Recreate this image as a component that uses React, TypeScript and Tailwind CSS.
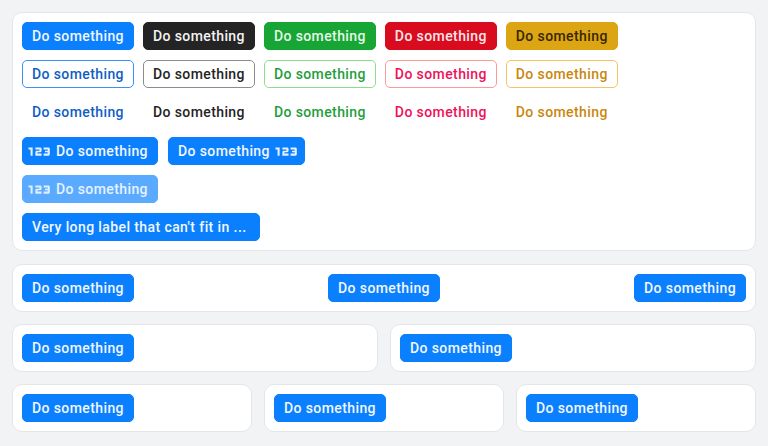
import React from 'react'
import { Md123 } from 'react-icons/md'

type Variant = 'solid' | 'outline' | 'ghost'
type Tone = 'blue' | 'dark' | 'green' | 'red' | 'yellow'

const styles: Record<Variant, Record<Tone, string>> = {
  solid: {
    blue: 'bg-[#0a80ff] text-[#f2f7ff] border-[#0a80ff]',
    dark: 'bg-[#242424] text-[#f4f4f4] border-[#242424]',
    green: 'bg-[#17a535] text-[#e4f9e6] border-[#17a535]',
    red: 'bg-[#d80b1f] text-[#fde6e8] border-[#d80b1f]',
    yellow: 'bg-[#dba513] text-[#3a2600] border-[#dba513]',
  },
  outline: {
    blue: 'bg-white text-[#0f5ec4] border-[#3a90fb]',
    dark: 'bg-white text-[#242424] border-[#8c8c8c]',
    green: 'bg-white text-[#1f9e3c] border-[#8ddd8d]',
    red: 'bg-white text-[#ef1158] border-[#fc9a9a]',
    yellow: 'bg-white text-[#c9870f] border-[#f3c563]',
  },
  ghost: {
    blue: 'bg-transparent text-[#0f5ec4] border-transparent',
    dark: 'bg-transparent text-[#242424] border-transparent',
    green: 'bg-transparent text-[#1f9e3c] border-transparent',
    red: 'bg-transparent text-[#ef1158] border-transparent',
    yellow: 'bg-transparent text-[#c9870f] border-transparent',
  },
}

const tones: Tone[] = ['blue', 'dark', 'green', 'red', 'yellow']

// the md icon has padding round the digits, crop it with negative margins
const Icon = () => <Md123 className="w-[33px] h-[33px] -mx-[7px] -my-[10px] shrink-0 opacity-95" />

const Button: React.FC<{
  variant?: Variant
  tone?: Tone
  iconLeft?: boolean
  iconRight?: boolean
  disabled?: boolean
  className?: string
  children: React.ReactNode
}> = ({ variant = 'solid', tone = 'blue', iconLeft, iconRight, disabled, className = '', children }) => (
  <button
    className={`h-7 shrink-0 inline-flex items-center gap-[7px] border rounded-[5px] text-[14px] font-medium tracking-[0.4px] leading-none whitespace-nowrap ${
      iconLeft ? 'pl-[7px] pr-[9px]' : iconRight ? 'pl-[9px] pr-[8px]' : 'px-[9px]'
    } ${disabled ? 'bg-[#5aabff] border-[#5aabff] text-[#e6f2ff]' : styles[variant][tone]} ${className}`}
  >
    {iconLeft && <Icon />}
    <span>{children}</span>
    {iconRight && <Icon />}
  </button>
)

const Card: React.FC<{ className?: string; children: React.ReactNode }> = ({ className = '', children }) => (
  <div className={`bg-white border border-[#e4e6ea] rounded-[10px] p-[9px] ${className}`}>{children}</div>
)

const App: React.FC = () => {
  return (
    <div className="min-h-[446px] bg-[#f2f3f5] p-3 flex flex-col gap-3" style={{ fontFamily: 'Roboto, "Liberation Sans", sans-serif' }}>
      <Card className="flex flex-col gap-[10px]">
        {(['solid', 'outline', 'ghost'] as Variant[]).map((v) => (
          <div key={v} className="flex gap-[9px]">
            {tones.map((t) => (
              <Button key={t} variant={v} tone={t}>
                Do something
              </Button>
            ))}
          </div>
        ))}
        <div className="flex gap-[10px] mt-px">
          <Button iconLeft>Do something</Button>
          <Button iconRight>Do something</Button>
        </div>
        <div className="flex">
          <Button iconLeft disabled>
            Do something
          </Button>
        </div>
        <div className="flex">
          <Button className="w-[238px]">Very long label that can't fit in ...</Button>
        </div>
      </Card>

      <Card className="flex justify-between mt-px">
        <Button>Do something</Button>
        <Button>Do something</Button>
        <Button>Do something</Button>
      </Card>

      <div className="grid grid-cols-2 gap-3">
        <Card className="flex">
          <Button>Do something</Button>
        </Card>
        <Card className="flex">
          <Button>Do something</Button>
        </Card>
      </div>

      <div className="grid grid-cols-3 gap-3">
        <Card className="flex">
          <Button>Do something</Button>
        </Card>
        <Card className="flex">
          <Button>Do something</Button>
        </Card>
        <Card className="flex">
          <Button>Do something</Button>
        </Card>
      </div>
    </div>
  )
}

export default App
